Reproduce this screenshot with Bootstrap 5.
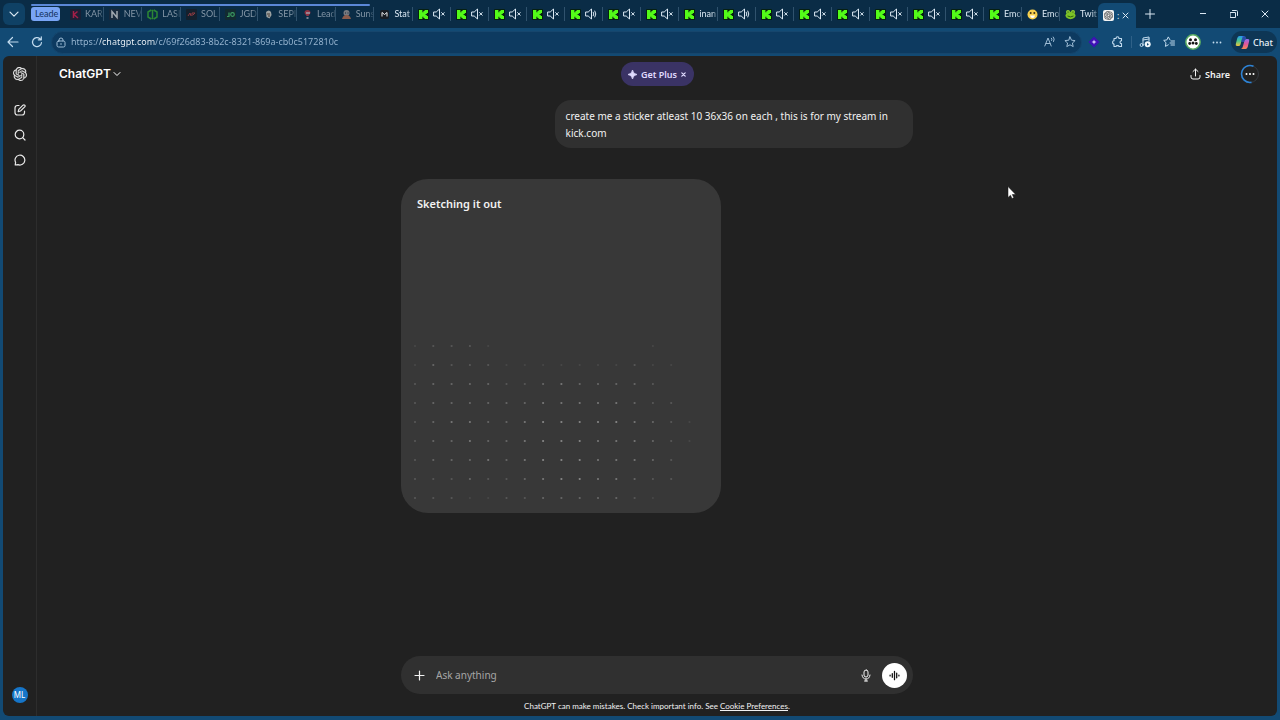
<!DOCTYPE html>
<html lang="en">
<head>
<meta charset="utf-8">
<meta name="viewport" content="width=device-width, initial-scale=1">
<title>ChatGPT</title>
<link href="https://cdn.jsdelivr.net/npm/bootstrap@5.3.0/dist/css/bootstrap.min.css" rel="stylesheet">
<style>
  :root { --chrome: #0d3a60; --bar: #124a74; --tabs: #0a2c46; --page: #212121; --raised: #303030; }
  body { font-family: "Noto Sans", "Open Sans", sans-serif; font-size: 10px; line-height: 17px; background: var(--bar); color: #f2f2f2; }
  button { background: none; border: 0; padding: 0; color: inherit; }
  svg { display: block; flex: none; }
  .ln { fill: none; stroke: currentColor; stroke-linecap: round; stroke-linejoin: round; }

  .tabstrip { background: var(--tabs); height: 28px; font-family: Lato, sans-serif; font-size: 9px; line-height: 12px; color: #dbe8f3; }
  .tabmenu { width: 22px; height: 22px; border-radius: 6px; background: #0f4165; margin: 3px 0 0 3px; }
  .grouped { flex: 348 1 0; min-width: 0; }
  .loose { flex: 685 1 0; min-width: 0; }
  .grouptag { width: 29px; height: 14px; margin: 0 5px 0 6px; background: #79a5f5; color: #12305c; border-radius: 3px; padding: 0 0 0 4px; }
  .groupline { left: 31px; width: 339px; top: 4px; height: 2px; background: #5b88d8; border-radius: 1px; }
  .tabitem { flex: 1 1 0; min-width: 0; gap: 4px; padding-left: 5px; height: 14px; border-right: 1px solid #30526d; overflow: hidden; white-space: nowrap; text-align: left; }
  .tabitem.dim { color: #8496a6; }
  .tabitem .cut { overflow: hidden; flex: 1 1 0; -webkit-mask-image: linear-gradient(90deg, #000 70%, transparent 110%); mask-image: linear-gradient(90deg, #000 70%, transparent 110%); }
  .tabitem.last { border-right-color: transparent; }
  .tabnow { width: 38px; height: 25px; background: var(--bar); border-radius: 6px 6px 0 0; margin-top: 3px; gap: 3px; padding-left: 5px; }
  .newtab { width: 27px; height: 28px; }
  .winbtn { width: 31px; height: 28px; }

  .toolbar { height: 28px; color: #c3dcef; padding: 0 3px 0 1px; }
  .toolbtn { width: 24px; height: 24px; }
  .address { height: 23px; border-radius: 12px; background: var(--chrome); border: 1px solid #16466d; padding: 0 5px 0 4px; margin-left: 2px; color: #9fbdd6; }
  .address input { border: 0; outline: 0; padding: 0 0 0 5px; min-width: 0; font-size: 9px; line-height: 14px; color: transparent; -webkit-background-clip: text; background-clip: text; background-image: linear-gradient(90deg, #9bb8d3 34px, #f4f9fd 34px, #f4f9fd 89px, #9bb8d3 89px); }
  .tooldiv { width: 1px; height: 12px; background: #2f6188; margin: 0 1px; }
  .chatpill { background: #0e3655; border-radius: 12px; height: 22px; width: 46px; margin-left: 2px; font-size: 9px; gap: 3px; color: #e9f2f9; font-weight: 500; }

  .page { background: var(--page); border-radius: 6px; margin: 0 3px 4px; overflow: hidden; }
  .rail { width: 34px; border-right: 1px solid #2d2d2d; color: #e8e8e8; padding-top: 5px; }
  .railbtn { width: 24px; height: 25px; }
  .home { margin-bottom: 11px; }
  .me { width: 16px; height: 16px; font-size: 8px; line-height: 16px; background: #1675c8; border-radius: 50%; margin-bottom: 13px; text-align: center; color: #fff; }
  .head { display: grid; grid-template-columns: 1fr auto 1fr; align-items: center; height: 36px; padding: 0 17px; }
  .brand { font: 600 12px/16px Inter, sans-serif; gap: 2px; color: #fff; margin-left: 5px; }
  .plus { background: #3a3365; color: #e0dcff; border-radius: 12px; height: 24px; width: 73px; font-size: 9px; font-weight: 600; gap: 4px; }
  .share { font-size: 9px; font-weight: 600; gap: 4px; color: #f4f4f4; margin-right: 10px; }
  .column { width: 100%; max-width: 512px; }
  .bubble { background: var(--raised); width: 70%; border-radius: 16px; padding: 8px 11px 6px; margin-top: 8px; }
  .sketch { background: #383838; width: 320px; height: 334px; border-radius: 27px; margin-top: 31px; padding: 17px 0 0; }
  .sketch h2 { font-size: 11px; line-height: 16px; font-weight: 600; margin: 0 16px; }
  .composer { background: var(--raised); border-radius: 19px; height: 38px; padding: 0 6px 0 13px; }
  .composer input { background: none; border: 0; outline: 0; padding: 0; margin-left: 11px; min-width: 0; color: #f2f2f2; font-size: 10px; line-height: 16px; }
  .composer input::placeholder { color: #a6a6a6; opacity: 1; }
  .voice { width: 25px; height: 25px; border-radius: 50%; background: #fff; color: #111; margin-left: 11px; }
  .fine { font-family: Lato, sans-serif; font-size: 8px; line-height: 12px; padding: 6px 0 4px; }
  .pointer { left: 1007px; top: 186px; }
</style>
</head>
<body class="vh-100 d-flex flex-column overflow-hidden">

<svg width="0" height="0" class="position-absolute" aria-hidden="true">
  <symbol id="kick" viewBox="0 0 11 11"><rect width="11" height="11" rx="1" fill="#062011"/><path d="M1 1h3.400v2.200h1V2h1.200V1H10v3H8.800v1H7.600v1h1.200v1H10v3H6.600V9H5.400V7.800h-1V10H1z" fill="#53fc18"/></symbol>
  <symbol id="mute" viewBox="0 0 12 12"><path class="ln" d="M1 4h2.200L6.500 1v10L3.200 8H1zM8.600 4.600l2.600 2.600M11.200 4.600L8.600 7.200"/></symbol>
  <symbol id="loud" viewBox="0 0 12 12"><path class="ln" d="M1 4h2.200L6.500 1v10L3.200 8H1zM8.300 4.200q1.200 1.800 0 3.600M9.900 3q2 3 0 6"/></symbol>
  <symbol id="knot" viewBox="0 0 24 24"><path fill="currentColor" stroke="currentColor" stroke-width=".4" d="M22.2819 9.8211a5.9847 5.9847 0 0 0-.5157-4.9108 6.0462 6.0462 0 0 0-6.5098-2.9A6.0651 6.0651 0 0 0 4.9807 4.1818a5.9847 5.9847 0 0 0-3.9977 2.9 6.0462 6.0462 0 0 0 .7427 7.0966 5.98 5.98 0 0 0 .511 4.9107 6.051 6.051 0 0 0 6.5146 2.9001A5.9847 5.9847 0 0 0 13.2599 24a6.0557 6.0557 0 0 0 5.7718-4.2058 5.9894 5.9894 0 0 0 3.9977-2.9001 6.0557 6.0557 0 0 0-.7475-7.0729zm-9.022 12.6081a4.4755 4.4755 0 0 1-2.8764-1.0408l.1419-.0804 4.7783-2.7582a.7948.7948 0 0 0 .3927-.6813v-6.7369l2.02 1.1686a.071.071 0 0 1 .038.052v5.5826a4.504 4.504 0 0 1-4.4945 4.4944zm-9.6607-4.1254a4.4708 4.4708 0 0 1-.5346-3.0137l.142.0852 4.783 2.7582a.7712.7712 0 0 0 .7806 0l5.8428-3.3685v2.3324a.0804.0804 0 0 1-.0332.0615L9.74 19.9502a4.4992 4.4992 0 0 1-6.1408-1.6464zM2.3408 7.8956a4.485 4.485 0 0 1 2.3655-1.9728V11.6a.7664.7664 0 0 0 .3879.6765l5.8144 3.3543-2.0201 1.1685a.0757.0757 0 0 1-.071 0l-4.8303-2.7865A4.504 4.504 0 0 1 2.3408 7.872zm16.5963 3.8558L13.1038 8.364 15.1192 7.2a.0757.0757 0 0 1 .071 0l4.8303 2.7913a4.4944 4.4944 0 0 1-.6765 8.1042v-5.6772a.79.79 0 0 0-.407-.667zm2.0107-3.0231l-.142-.0852-4.7735-2.7818a.7759.7759 0 0 0-.7854 0L9.409 9.2297V6.8974a.0662.0662 0 0 1 .0284-.0615l4.8303-2.7866a4.4992 4.4992 0 0 1 6.6802 4.66zM8.3065 12.863l-2.02-1.1638a.0804.0804 0 0 1-.038-.0567V6.0742a4.4992 4.4992 0 0 1 7.3757-3.4537l-.142.0805L8.704 5.459a.7948.7948 0 0 0-.3927.6813zm1.0976-2.3654l2.602-1.4998 2.6069 1.4998v2.9994l-2.5974 1.4997-2.6067-1.4997Z"/></symbol>
</svg>

<header>
  <div class="tabstrip d-flex align-items-center position-relative">
    <div class="groupline position-absolute"></div>
    <button class="tabmenu flex-shrink-0 d-flex align-items-center justify-content-center align-self-start" aria-label="Tab actions"><svg width="10" height="10" viewBox="0 0 10 10"><path class="ln" stroke-width="1.2" d="M1 3.2l4 4 4-4"/></svg></button>
    <button class="grouptag flex-shrink-0 text-start">Leade</button>
    <div class="grouped d-flex">
      <button class="tabitem dim d-flex align-items-center"><svg width="11" height="11"><rect width="11" height="11" rx="1" fill="#1b2036"/><path d="M3.500 2v7M7.500 2.500L4 5.500l4 3.500" fill="none" stroke="#a31f48" stroke-width="1.500"/></svg><span class="cut">KARI</span></button>
      <button class="tabitem dim d-flex align-items-center"><svg width="11" height="11"><rect width="11" height="11" rx="1" fill="#18293c"/><path d="M3 9V2.500l5 6V2" fill="none" stroke="#a3a9b0" stroke-width="1.500"/></svg><span class="cut">NEV</span></button>
      <button class="tabitem dim d-flex align-items-center"><svg width="11" height="11"><path d="M5.500 .8v9.400M4.300 1L1 3v5l3.300 2M6.700 1L10 3v5l-3.300 2" fill="none" stroke="#2c8735" stroke-width="1.500"/></svg><span class="cut">LASI</span></button>
      <button class="tabitem dim d-flex align-items-center"><svg width="11" height="11"><rect width="11" height="11" rx="1" fill="#14202d"/><path d="M2 7l2-3 1 3M6 7V4h3L7 6" fill="none" stroke="#8c3a42"/></svg><span class="cut">SOL</span></button>
      <button class="tabitem dim d-flex align-items-center"><svg width="11" height="11"><rect width="11" height="11" rx="1" fill="#122b31"/><path d="M4 3.500v4H2" fill="none" stroke="#3c9b62" stroke-width="1.200"/><circle cx="7.500" cy="5.500" r="1.800" fill="none" stroke="#3c9b62" stroke-width="1.200"/></svg><span class="cut">JGD</span></button>
      <button class="tabitem dim d-flex align-items-center"><svg width="11" height="11"><path d="M3 3q3-3 5 0l.6 3L6.500 9.500 3.500 8z" fill="#9aa0a0"/><path d="M4 5h3M5 7h2" stroke="#4a3b30"/></svg><span class="cut">SEPI</span></button>
      <button class="tabitem dim d-flex align-items-center"><svg width="11" height="11"><path d="M2.500 4q0-3 3-3t3 3L6.500 7h-2z" fill="#8d3142"/><path d="M4 4h4M4.500 9h2" stroke="#9d9aa8" stroke-width="1.300"/></svg><span class="cut">Lead</span></button>
      <button class="tabitem dim d-flex align-items-center"><svg width="11" height="11"><circle cx="5.500" cy="4" r="3" fill="#777a80"/><path d="M1 10q1-4 4.500-4T10 10z" fill="#8b5b4b"/><path d="M4 4h1M6.500 4h1" stroke="#192a3b"/></svg><span class="cut">Suns</span></button>
      <button class="tabitem d-flex align-items-center"><svg width="11" height="11"><rect x="1" y="1" width="9" height="9" rx="2" fill="#171c22"/><path d="M3 7.500v-4l2.500 2L8 3.500v4" fill="none" stroke="#eee"/></svg><span class="cut">Stat</span></button>
    </div>
    <div class="loose d-flex" id="loose"></div>
    <div class="tabnow flex-shrink-0 d-flex align-items-center align-self-start">
      <svg width="11" height="11" viewBox="0 0 11 11"><rect width="11" height="11" rx="2" fill="#f3f3f3"/><svg x="1" y="1" width="9" height="9" color="#555"><use href="#knot"/></svg></svg>
      <span>:</span>
      <button aria-label="Close tab"><svg width="7" height="7" viewBox="0 0 7 7"><path class="ln" d="M1 1l5 5M6 1L1 6"/></svg></button>
    </div>
    <button class="newtab flex-shrink-0 d-flex align-items-center justify-content-center" aria-label="New tab"><svg width="10" height="10" viewBox="0 0 10 10"><path class="ln" d="M5 .5v9M.5 5h9"/></svg></button>
    <div class="d-flex flex-shrink-0 ms-4">
      <button class="winbtn d-flex align-items-center justify-content-center" aria-label="Minimize"><svg width="8" height="8"><path stroke="currentColor" d="M1 3.500h6"/></svg></button>
      <button class="winbtn d-flex align-items-center justify-content-center" aria-label="Restore"><svg width="8" height="8"><path class="ln" d="M.5 2.500h5v5h-5zM2.500 .5h4q1 0 1 1v4"/></svg></button>
      <button class="winbtn d-flex align-items-center justify-content-center" aria-label="Close"><svg width="8" height="8"><path class="ln" d="M1 1l6 6M7 1L1 7"/></svg></button>
    </div>
  </div>

  <div class="toolbar d-flex align-items-center">
    <button class="toolbtn d-flex align-items-center justify-content-center" aria-label="Back"><svg width="12" height="12"><path class="ln" stroke-width="1.200" d="M11 6H1M5.500 1.500L1 6l4.500 4.500"/></svg></button>
    <button class="toolbtn d-flex align-items-center justify-content-center" aria-label="Reload"><svg width="12" height="12"><path class="ln" stroke-width="1.200" d="M10.500 6.500A4.500 4.500 0 1 1 9 2.700l1.200 1M10.300 .8v3H7.300"/></svg></button>
    <div class="address d-flex align-items-center flex-grow-1">
      <svg width="10" height="11"><rect x="1" y="4" width="8" height="6" rx="1.500" class="ln"/><path class="ln" d="M3 4V3a2 2 0 0 1 4 0v1M5 6.500v1"/></svg>
      <input class="flex-grow-1" type="text" aria-label="Address" value="https://chatgpt.com/c/69f26d83-8b2c-8321-869a-cb0c5172810c">
      <button aria-label="Read aloud"><svg width="12" height="12"><path class="ln" d="M.8 10L4 2l3.200 8M2 7.500h4M7.500 2.200q1 1 .2 2.300M9.300 1q1.800 2 .3 4.500"/></svg></button>
      <button class="ms-2" aria-label="Add to favorites"><svg width="12" height="12"><path class="ln" d="M6 .9l1.500 3.300 3.600.4-2.700 2.400.8 3.600L6 8.800l-3.200 1.800.8-3.600L.9 4.600l3.600-.4z"/></svg></button>
    </div>
    <button class="toolbtn d-flex align-items-center justify-content-center" aria-label="Extension"><svg width="12" height="12"><path d="M6 .5L11.500 6 6 11.500.5 6z" fill="#3d10b4"/><path d="M6 3.500L6.700 5.300 8.500 6 6.700 6.700 6 8.500 5.300 6.700 3.500 6l1.800-.7z" fill="#d9c9ff"/></svg></button>
    <button class="toolbtn d-flex align-items-center justify-content-center" aria-label="Extensions"><svg width="12" height="12"><path class="ln" stroke-width="1.100" d="M2 2.500h2Q4 .8 5.500.8T7 2.500h2.500v2.300Q8 4.800 8 6.200t1.500 1.400v2.900H7Q7 9.600 5.500 9.600T4 10.500H2V8Q.6 8 .6 6.300T2 4.800z"/></svg></button>
    <div class="tooldiv"></div>
    <button class="toolbtn d-flex align-items-center justify-content-center" aria-label="Media"><svg width="12" height="12"><path class="ln" d="M4 9V2l6-1v4M4 4l6-1"/><circle cx="2.600" cy="9" r="1.500" class="ln"/><circle cx="8.700" cy="8.300" r="3" fill="#eef6fb"/><path d="M8 6.900l2 1.400-2 1.400z" fill="#124a74"/></svg></button>
    <button class="toolbtn d-flex align-items-center justify-content-center" aria-label="Favorites"><svg width="12" height="12"><path class="ln" d="M7 3.900L5.300.9 3.900 3.900.7 4.400 3 6.700l-.6 3.700 2.900-1.600M8 5h3.500M7 7h4.500M8 9h3.500"/></svg></button>
    <button class="toolbtn d-flex align-items-center justify-content-center" aria-label="Profile"><svg width="16" height="16"><circle cx="8" cy="8" r="7.200" fill="#fff" stroke="#58ab61" stroke-width="1.500"/><circle cx="5.500" cy="5.800" r="1.500" fill="#151515"/><circle cx="10.500" cy="5.800" r="1.500" fill="#151515"/><circle cx="4.700" cy="9.500" r="1.400" fill="#151515"/><circle cx="11.300" cy="9.500" r="1.400" fill="#151515"/><circle cx="8" cy="9" r="1.500" fill="#151515"/></svg></button>
    <button class="toolbtn d-flex align-items-center justify-content-center" aria-label="Settings and more"><svg width="10" height="3" fill="currentColor"><circle cx="1.500" cy="1.500" r=".9"/><circle cx="5" cy="1.500" r=".9"/><circle cx="8.500" cy="1.500" r=".9"/></svg></button>
    <button class="chatpill d-flex align-items-center justify-content-center"><svg width="15" height="15" viewBox="0 0 15 15"><defs><linearGradient id="ca" x2="0" y2="1"><stop stop-color="#2497ef"/><stop offset=".5" stop-color="#4bc98a"/><stop offset="1" stop-color="#f2c23c"/></linearGradient><linearGradient id="cb" x2="0" y2="1"><stop stop-color="#9170f0"/><stop offset=".5" stop-color="#e2559a"/><stop offset="1" stop-color="#f58a52"/></linearGradient></defs><path d="M4.500 1H9Q7.500 1.500 7 4L5.500 9.500Q5 11 3.500 11H2Q.3 11 .8 9L2.300 3Q3 1 4.500 1z" fill="url(#ca)"/><path d="M10.500 14H6q1.500-.5 2-3l1.500-5.500Q10 4 11.500 4H13q1.700 0 1.200 2l-1.500 6q-.7 2-2.200 2z" fill="url(#cb)"/><path d="M7 1h2.500q1 0 1.500 1.500L11.300 4Q9.800 4 9.300 6L9 7H6.200L7 4z" fill="#3a5fe0" opacity=".6"/></svg>Chat</button>
  </div>
</header>

<div class="page d-flex flex-grow-1">
  <nav class="rail d-flex flex-column align-items-center">
    <a href="#" class="railbtn home d-flex align-items-center justify-content-center text-reset" aria-label="Home"><svg width="14" height="14"><use href="#knot"/></svg></a>
    <button class="railbtn d-flex align-items-center justify-content-center" aria-label="New chat"><svg width="12" height="12"><path class="ln" stroke-width="1.200" d="M5 1.500H3.500Q1 1.500 1 4v4.500Q1 11 3.500 11H8q2.500 0 2.500-2.500V7M9 1.200q.9-.8 1.700 0t0 1.700L6.500 7l-2.300.6.600-2.200z"/></svg></button>
    <button class="railbtn d-flex align-items-center justify-content-center" aria-label="Search"><svg width="12" height="12"><circle cx="5.500" cy="5.500" r="4.300" class="ln" stroke-width="1.200"/><path class="ln" stroke-width="1.200" d="M8.700 8.700l2.300 2.300"/></svg></button>
    <button class="railbtn d-flex align-items-center justify-content-center" aria-label="Chats"><svg width="12" height="12"><path class="ln" stroke-width="1.200" d="M1.600 8.400A4.900 4.900 0 1 1 4 10.600L1.200 11z"/></svg></button>
    <button class="me mt-auto">ML</button>
  </nav>

  <main class="d-flex flex-column flex-grow-1">
    <div class="head">
      <div class="d-flex"><button class="brand d-flex align-items-center">ChatGPT<svg width="8" height="8"><path class="ln" stroke="#9a9a9a" d="M1 2.500l3 3 3-3"/></svg></button></div>
      <button class="plus d-flex align-items-center justify-content-center"><svg width="9" height="9"><path d="M4.500 0Q5 4 9 4.500 5 5 4.500 9 4 5 0 4.500 4 4 4.500 0z" fill="currentColor" stroke="currentColor" stroke-width=".8"/></svg>Get Plus<svg width="5" height="5"><path class="ln" stroke-width="1.200" d="M.8.8l3.400 3.400M4.200.8L.8 4.200"/></svg></button>
      <div class="d-flex align-items-center justify-content-end">
        <button class="share d-flex align-items-center"><svg width="11" height="12"><path class="ln" d="M5.500 8V1.200M3 3.500l2.500-2.400L8 3.500M1 7.500V9q0 2 2 2h5q2 0 2-2V7.500"/></svg>Share</button>
        <button aria-label="More"><svg width="20" height="20"><circle cx="10" cy="10" r="8.500" fill="none" stroke="#34393f"/><path d="M13.500 2.250A8.500 8.500 0 1 0 11.500 18.400" fill="none" stroke="#2d83d6" stroke-width="1.600"/><g fill="#fff"><circle cx="6.500" cy="10" r="1"/><circle cx="10" cy="10" r="1"/><circle cx="13.500" cy="10" r="1"/></g></svg></button>
      </div>
    </div>

    <div class="column mx-auto flex-grow-1">
      <div class="bubble ms-auto">create me a sticker atleast 10 36x36 on each , this is for my stream in kick.com</div>
      <section class="sketch">
        <h2>Sketching it out</h2>
        <svg id="dots" width="320" height="296" aria-hidden="true"></svg>
      </section>
    </div>

    <div class="column mx-auto">
      <div class="composer d-flex align-items-center">
        <button aria-label="Add"><svg width="11" height="11"><path class="ln" stroke-width="1.200" d="M5.500 1v9M1 5.500h9"/></svg></button>
        <input class="flex-grow-1" type="text" placeholder="Ask anything" aria-label="Message">
        <button aria-label="Dictate"><svg width="10" height="13"><rect x="3" y="1" width="4" height="7" rx="2" class="ln"/><path class="ln" d="M1 6q.5 4 4 4t4-4M5 10v2M3.500 12h3"/></svg></button>
        <button class="voice d-flex align-items-center justify-content-center" aria-label="Voice mode"><svg width="11" height="11" viewBox="0 0 12 12"><path class="ln" stroke-width="1.400" d="M1.200 5.500v1M3.600 4v4M6 1.500v9M8.400 3.500v5M10.800 5.500v1"/></svg></button>
      </div>
      <p class="fine text-center mb-0">ChatGPT can make mistakes. Check important info. See <a href="#" class="text-reset">Cookie Preferences</a>.</p>
    </div>
  </main>
</div>

<svg class="pointer position-absolute" width="10" height="14" aria-hidden="true"><path d="M1 .5v11l2.500-2.300L5 12.500l1.800-.8L5.300 8.500h3.400z" fill="#fff" stroke="#111" stroke-width=".5"/></svg>

<script src="https://cdn.jsdelivr.net/npm/bootstrap@5.3.0/dist/js/bootstrap.bundle.min.js"></script>
<script>
  // Open tabs outside the group: [favicon, sound state or title]
  const kick = '<svg width="11" height="11"><use href="#kick"/></svg>';
  const smile = '<svg width="11" height="11"><circle cx="5.5" cy="5.5" r="5" fill="#f6d04e"/><circle cx="3.700" cy="4" r="1" fill="#40331a"/><circle cx="7.300" cy="4" r="1" fill="#40331a"/><path d="M3 6.500h5q-.5 2.500-2.500 2.500T3 6.500z" fill="#fff"/></svg>';
  const frog = '<svg width="11" height="11"><circle cx="3" cy="3" r="2" fill="#8ed334"/><circle cx="8" cy="3" r="2" fill="#8ed334"/><ellipse cx="5.500" cy="6.500" rx="5" ry="3.700" fill="#7cc326"/><path d="M2.500 7q3 1.800 6 0" stroke="#30620f" fill="none"/><path d="M3 2.500v1M8 2.500v1" stroke="#182b0a"/></svg>';
  const open = [..."mmmmlmm"].map(s => [kick, s]).concat([[kick, "inan"]], [..."lmmmmmm"].map(s => [kick, s]), [[kick, "Emo"], [smile, "Emo"], [frog, "Twit"]]);
  document.getElementById("loose").innerHTML = open.map(([icon, what], i) => {
    const body = what.length > 1 ? `<span class="cut">${what}</span>`
      : `<svg width="12" height="12"><use href="#${what === "m" ? "mute" : "loud"}"/></svg>`;
    return `<button class="tabitem d-flex align-items-center${i === open.length - 1 ? " last" : ""}">${icon}${body}</button>`;
  }).join("");

  // Placeholder dots: one digit of brightness per dot, row by row
  const rows = ["1222100000000100", "1322211111112110", "2333322343333200", "2333333444443220", "2344334555554321", "2334334555444321", "2333434555444320", "2223223455443220", "2221122333332100"];
  document.getElementById("dots").innerHTML = rows.map((row, j) => [...row].map((v, i) =>
    `<circle cx="${14 + i * 18.3}" cy="${134 + j * 19}" r="1.1" fill="#fff" opacity="${v * 0.08}"/>`).join("")).join("");
</script>
</body>
</html>
